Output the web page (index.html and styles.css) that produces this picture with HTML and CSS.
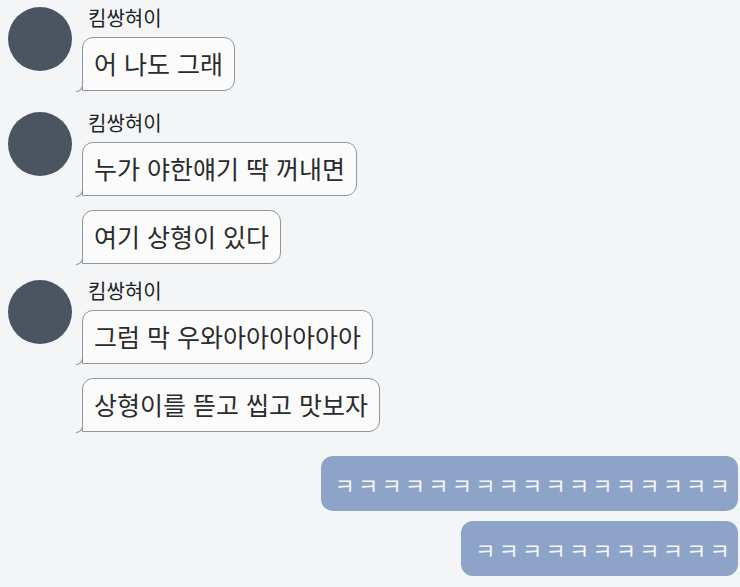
FILE: index.html
```html
<!DOCTYPE html>
<html lang="ko">
<head>
    <meta charset="UTF-8">
    <meta name="viewport" content="width=device-width, initial-scale=1.0">
    <title>채팅</title>
    <link rel="stylesheet" href="styles.css">
</head>
<body>
    <div class="chat">
        <div class="group">
            <div class="avatar"></div>
            <div class="msgs">
                <div class="name">킴쌍혀이</div>
                <div class="bubble">어 나도 그래</div>
            </div>
        </div>

        <div class="group">
            <div class="avatar"></div>
            <div class="msgs">
                <div class="name">킴쌍혀이</div>
                <div class="bubble">누가 야한얘기 딱 꺼내면</div>
                <div class="bubble">여기 상형이 있다</div>
            </div>
        </div>

        <div class="group">
            <div class="avatar"></div>
            <div class="msgs">
                <div class="name">킴쌍혀이</div>
                <div class="bubble">그럼 막 우와아아아아아아</div>
                <div class="bubble">상형이를 뜯고 씹고 맛보자</div>
            </div>
        </div>

        <div class="mine">
            <div class="sent">ㅋㅋㅋㅋㅋㅋㅋㅋㅋㅋㅋㅋㅋㅋㅋㅋㅋ</div>
            <div class="sent">ㅋㅋㅋㅋㅋㅋㅋㅋㅋㅋㅋ</div>
        </div>
    </div>
</body>
</html>
```

FILE: styles.css
```css
body {
    margin: 0;
    background-color: #f3f5f7;
    font-family: "Noto Sans CJK KR", "Noto Sans", sans-serif;
    color: #2b2b2b;
}
.chat {
    padding: 7px 2px 0 8px;
    display: flex;
    flex-direction: column;
}
.group {
    display: flex;
    align-items: flex-start;
    gap: 10px;
    margin-bottom: 16px;
}
.group:first-child {
    margin-bottom: 21px;
}
.avatar {
    width: 64px;
    height: 64px;
    border-radius: 50%;
    background-color: #4b5562;
    flex-shrink: 0;
}
.msgs {
    display: flex;
    flex-direction: column;
    align-items: flex-start;
    gap: 14px;
}
.name {
    font-size: 20px;
    line-height: 22px;
    height: 22px;
    margin: 0 0 -6px 6px;
    color: #222222;
}
.bubble {
    position: relative;
    box-sizing: border-box;
    height: 54px;
    padding: 0 11px;
    font-size: 25px;
    line-height: 51px;
    background-color: #fbfbfb;
    border: 1.5px solid #8f989f;
    border-radius: 11px;
    border-bottom-left-radius: 0;
}
/* little hook at the bottom left corner */
.bubble::before {
    content: '';
    position: absolute;
    box-sizing: border-box;
    left: -7px;
    bottom: -1.5px;
    width: 7px;
    height: 7px;
    border-right: 1.5px solid #8f989f;
    border-bottom: 1.5px solid #8f989f;
    border-bottom-right-radius: 7px;
}
.mine {
    display: flex;
    flex-direction: column;
    align-items: flex-end;
    gap: 10px;
    margin-top: 8px;
}
.sent {
    box-sizing: border-box;
    height: 55px;
    padding: 0 5px 0 14px;
    font-size: 22px;
    line-height: 56px;
    letter-spacing: 3.2px;
    color: #f4f6fa;
    background-color: #8da3c8;
    border-radius: 12px;
}
```
